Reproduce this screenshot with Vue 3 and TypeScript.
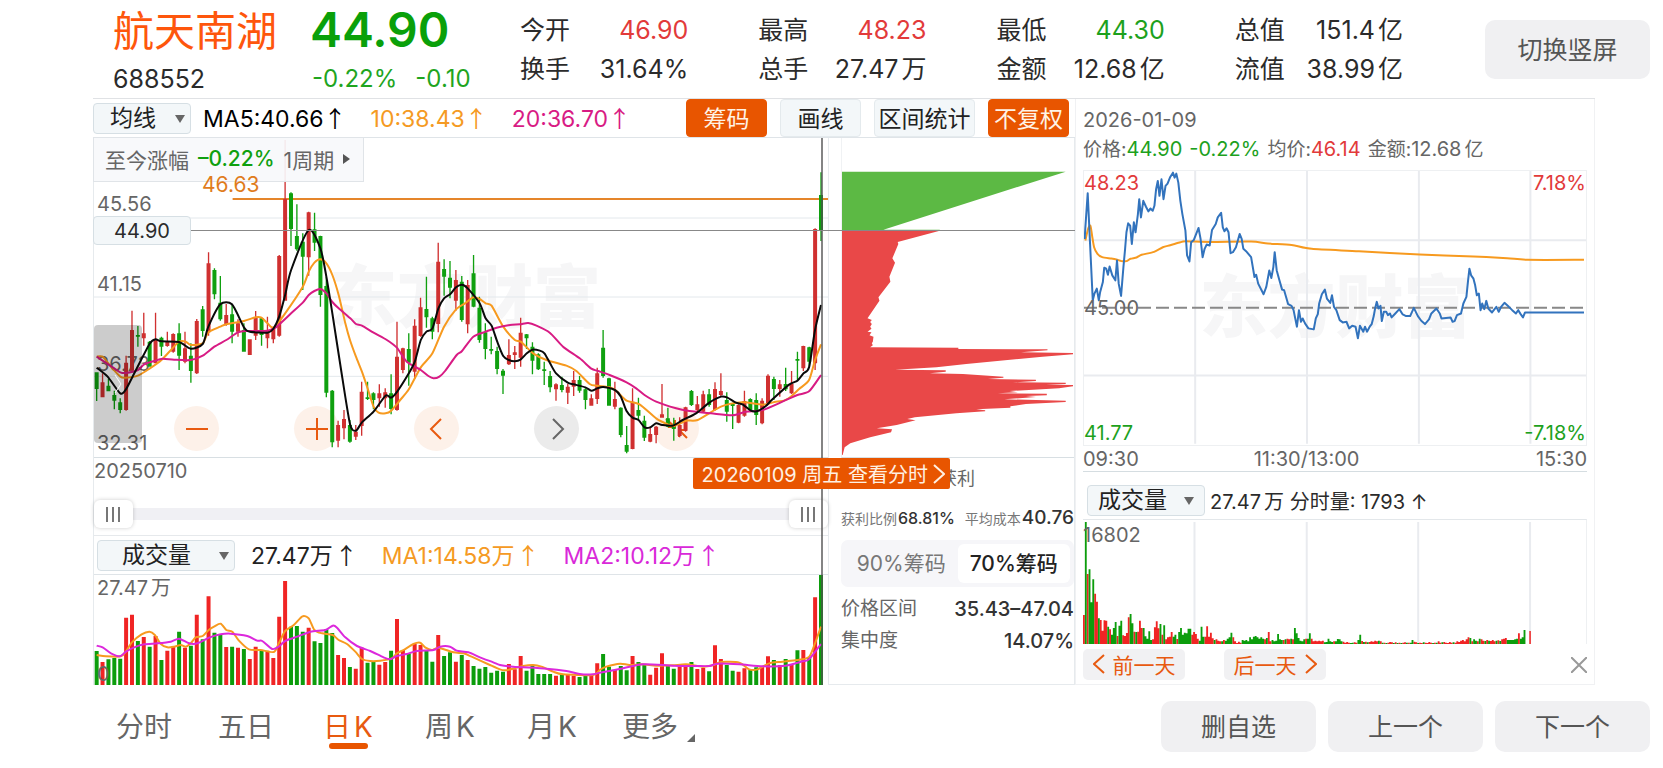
<script setup lang="ts">
import { ref } from 'vue'

interface Candle {
  up: boolean
  high: number
  top: number
  bottom: number
  low: number
  volume: number
}

interface Bar {
  up: boolean
  size: number
}

const stats = [
  [
    { label: '今开', value: '46.90', unit: '', tone: 'rise' },
    { label: '换手', value: '31.64%', unit: '', tone: '' },
  ],
  [
    { label: '最高', value: '48.23', unit: '', tone: 'rise' },
    { label: '总手', value: '27.47', unit: '万', tone: '' },
  ],
  [
    { label: '最低', value: '44.30', unit: '', tone: 'fall' },
    { label: '金额', value: '12.68', unit: '亿', tone: '' },
  ],
  [
    { label: '总值', value: '151.4', unit: '亿', tone: '' },
    { label: '流值', value: '38.99', unit: '亿', tone: '' },
  ],
]

const tabs = [
  { zh: '分时', latin: '' },
  { zh: '五日', latin: '' },
  { zh: '日', latin: 'K' },
  { zh: '周', latin: 'K' },
  { zh: '月', latin: 'K' },
  { zh: '更多', latin: '' },
]
const activeTab = ref(2)
const chipRange = ref('70')
const rangeStart = ref(0)
const rangeEnd = ref(100)

// direction, high, body top, body bottom, low, volume top (chart units)
const rawCandles = `
G 577 577 627 663 603|R 580 607 652 652 636|G 597 617 634 634 628|G 632 645 662 688 624|G 655 667 690 700 626
R 527 548 690 692 503|R 392 450 572 577 494|G 438 465 469 500 573|R 398 460 475 497 561|G 483 485 560 560 590
R 398 480 550 550 558|G 470 473 500 528 630|R 455 483 498 500 602|R 460 462 515 518 590|G 430 460 527 570 545
R 455 505 545 550 593|G 490 527 573 608 587|R 417 423 580 582 494|G 378 388 453 470 568|R 217 250 457 467 439
G 265 270 343 358 548|G 288 368 418 422 553|R 372 405 432 437 591|G 372 403 455 490 590|R 418 430 455 470 593
G 430 450 515 515 597|R 478 478 525 525 627|R 393 412 467 480 590|G 413 415 465 497 600|R 410 452 475 505 602
R 440 445 478 490 624|R 225 228 467 470 500|R -120 57 362 362 393|G 37 40 147 198 530|G 73 168 208 212 528
G 160 185 230 330 545|R 95 97 232 287 533|G 98 148 188 213 574|G 167 168 345 380 579|G 290 318 638 652 538
G 630 632 787 802 549|R 722 735 782 802 615|R 690 717 745 778 624|G 720 735 785 788 651|R 735 755 770 780 656
R 605 635 738 767 593|G 605 652 657 660 638|G 637 640 660 688 635|R 613 640 655 680 644|R 625 637 655 683 636
G 583 640 687 703 602|R 425 530 690 692 507|R 503 505 570 580 600|G 460 507 548 617 610|R 418 437 575 597 581
R 353 382 468 470 585|G 290 387 412 443 600|G 410 415 455 478 635|R 188 245 432 457 555|G 238 267 290 347 618
G 243 293 323 355 607|R 270 300 362 392 635|G 288 305 420 425 615|R 300 315 433 460 630|G 225 280 380 382 648
G 350 383 480 488 656|G 430 457 507 538 651|G 470 507 512 523 668|G 500 513 567 583 662|G 567 572 587 642 665
R 478 525 553 555 642|R 498 517 525 567 658|R 413 458 533 560 618|G 462 463 475 507 662|G 487 500 542 583 648
G 520 523 568 570 672|G 545 568 573 615 672|G 573 588 622 637 672|R 610 613 628 662 677|G 590 615 630 637 673
R 612 620 638 672 673|R 573 600 620 648 677|G 588 600 632 638 681|G 625 628 660 688 676|R 643 655 677 677 676
R 563 580 657 672 640|G 450 503 588 593 612|G 593 595 677 677 650|R 605 657 680 688 660|G 682 683 765 772 648
G 738 795 815 820 661|R 625 665 807 808 618|G 653 690 707 720 636|G 707 722 773 783 642|R 740 762 785 787 674
R 738 740 765 790 653|R 612 703 713 713 610|G 683 715 740 742 645|G 713 735 747 782 656|R 712 735 768 772 650
R 680 682 752 755 645|G 630 633 675 678 636|R 648 673 690 697 657|R 632 643 695 697 653|G 627 643 675 680 664
R 607 627 690 692 586|R 580 633 645 650 627|G 637 660 695 725 645|G 668 672 678 747 662|R 673 675 728 730 665
R 632 663 707 710 655|G 655 657 690 693 659|G 640 660 705 735 652|R 655 662 730 733 650|R 583 587 670 673 619
G 590 597 627 660 630|R 600 613 627 650 645|G 563 612 628 633 627|R 573 612 640 642 643|G 515 537 542 603 601
R 497 498 565 573 600|G 500 502 545 560 622|R 145 147 550 570 442|G -23 45 152 183 375`

const candles: Candle[] = rawCandles
  .trim()
  .split(/[|\n]/)
  .map((row) => {
    const [side, ...rest] = row.trim().split(' ')
    const [high, top, bottom, low, volume] = rest.map(Number)
    return { up: side === 'R', high, top, bottom, low, volume }
  })

const PITCH = 17.715
const candleX = (i: number) => 17 + PITCH * i

const candlePath = (up: boolean) =>
  candles
    .map((c, i) => {
      if (c.up !== up) return ''
      const x = candleX(i)
      return (
        `M${x - 6} ${c.top}h12V${Math.max(c.bottom, c.top + 5)}h-12z` +
        `M${x - 2} ${c.high}h4V${c.low}h-4z`
      )
    })
    .join('')

const volumePath = (up: boolean) =>
  candles
    .map((c, i) => (c.up === up ? `M${candleX(i) - 6} ${c.volume}h12V705h-12z` : ''))
    .join('')

// Catmull-Rom smoothing for the moving averages
const smooth = (source: string) => {
  const p = source
    .trim()
    .split(/\s+/)
    .map((s) => s.split(',').map(Number))
  let d = `M${p[0][0]} ${p[0][1]}`
  for (let i = 0; i < p.length - 1; i++) {
    const a = p[Math.max(i - 1, 0)]
    const b = p[i]
    const c = p[i + 1]
    const e = p[Math.min(i + 2, p.length - 1)]
    d += `C${b[0] + (c[0] - a[0]) / 8} ${b[1] + (c[1] - a[1]) / 8} ${c[0] - (e[0] - b[0]) / 8} ${c[1] - (e[1] - b[1]) / 8} ${c[0]} ${c[1]}`
  }
  return d
}

const ma5 = smooth(`17,563 50,590 88,640 105,628 125,590 176,492 194,478 212,484 265,486 300,506 336,492 353,440 389,373
424,373 460,442 478,455 531,458 548,447 566,410 584,345 602,270 655,150 690,205 708,290 726,400 750,555 779,732 797,752
815,727 850,695 886,647 903,653 921,635 956,580 974,545 992,480 1009,455 1027,445 1045,385 1062,355 1080,343 1098,322
1116,314 1133,325 1169,370 1187,415 1205,437 1222,485 1240,528 1257,540 1275,544 1293,538 1311,520 1328,509 1350,512
1364,520 1381,550 1399,580 1434,608 1452,613 1487,622 1505,632 1523,625 1541,621 1576,630 1594,650 1611,693 1629,713
1647,720 1665,742 1682,742 1700,730 1718,735 1750,737 1780,720 1820,700 1860,668 1895,650 1913,652 1940,668 1960,673
1985,692 2005,693 2030,678 2050,658 2100,614 2125,602 2143,580 2160,562 2178,450 2196,375`)

const ma10 = smooth(`17,530 35,530 60,560 88,590 105,593 141,587 176,566 212,540 247,503 265,485 285,485 300,495 336,490
353,457 389,440 407,433 460,423 495,412 513,413 531,430 550,443 584,400 637,320 655,275 672,248 690,238 708,250 726,285
745,345 765,430 779,480 797,530 815,575 832,625 850,680 865,698 886,700 903,692 930,660 956,628 992,562 1027,520
1062,440 1098,388 1125,370 1150,352 1169,357 1187,370 1205,377 1240,440 1275,480 1293,485 1330,520 1370,540 1430,557
1460,573 1500,612 1523,617 1560,622 1580,632 1611,662 1650,673 1700,715 1735,733 1755,738 1790,722 1825,720 1895,680
1960,667 2020,674 2060,665 2085,662 2105,650 2130,627 2160,600 2178,540 2196,493`)

const ma20 = smooth(`17,530 70,565 88,577 105,579 141,570 160,553 190,543 215,536 250,539 300,540 336,527 371,500 407,480
442,457 470,453 531,452 555,443 602,400 637,368 655,345 672,333 690,327 708,340 726,366 745,385 780,415 797,432 815,437
850,458 890,480 920,503 950,545 992,570 1015,588 1030,595 1048,590 1065,573 1100,525 1116,513 1150,470 1187,455 1220,443
1260,435 1290,433 1315,429 1340,437 1380,458 1420,500 1470,535 1505,566 1525,573 1560,585 1611,607 1640,625 1665,645
1700,665 1760,685 1800,693 1865,700 1930,706 1970,695 2020,690 2080,665 2125,645 2160,634 2196,585`)

const volumeMa1 = smooth(`17,615 45,619 90,619 105,605 123,577 152,553 176,545 192,555 210,582 230,592 250,590 270,585
285,590 300,580 315,562 336,558 354,540 370,530 390,521 407,540 425,545 445,572 475,598 510,600 550,606 565,580 584,543
610,525 636,499 655,505 672,540 695,550 727,555 745,570 770,582 795,605 815,627 840,633 870,632 905,625 920,610 940,600
970,582 990,578 1005,592 1025,600 1045,593 1090,607 1120,610 1145,620 1200,645 1230,658 1245,661 1270,656 1300,648
1330,645 1355,650 1390,665 1420,673 1510,675 1530,660 1550,650 1592,641 1620,645 1660,643 1700,647 1750,646 1790,643
1840,650 1870,646 1895,636 1950,638 1980,658 2005,658 2040,640 2080,635 2140,628 2162,618 2178,580 2196,530`)

const volumeMa2 = smooth(`17,587 35,592 60,610 87,619 105,605 130,592 160,583 200,580 240,575 265,566 295,580 320,580
355,563 390,553 420,551 470,558 500,572 515,573 545,597 565,590 584,573 620,560 660,545 705,540 727,527 740,533 765,562
800,588 840,603 880,622 900,628 920,618 950,612 980,603 1030,600 1050,590 1080,590 1100,602 1135,607 1170,622 1210,637
1230,645 1270,650 1370,656 1430,663 1470,672 1510,673 1530,668 1590,657 1660,643 1750,647 1820,648 1860,648 1885,641
1950,643 2020,649 2090,647 2140,634 2160,628 2196,582`)

const chipProfile = `35,212 330,212 203,246 205,252 187,295 195,308 178,350 181,365 145,412 148,422 112,475 125,480 120,486
125,492 120,500 124,506 112,515 124,517 118,526 130,530 128,545 125,550 128,556 120,562 386,563 386,567 655,568 655,571
575,577 732,579 732,583 640,590 410,612 320,622 195,629 348,631 348,635 300,640 400,642 522,650 522,653 475,657 620,659
620,663 550,667 710,668 710,672 650,674 732,675 732,679 690,685 540,693 565,697 505,700 653,701 653,706 590,708 620,711
525,718 710,722 710,726 590,732 543,739 543,743 440,748 467,751 467,754 380,760 255,772 232,777 257,781 200,795 140,805
186,808 183,817 120,832 60,850 43,862 37,885 35,885`

const minutePrice = `26,235 28,200 35,97 42,250 50,420 55,400 62,385 68,420 72,395 80,365 84,322 90,325 95,343 100,318
108,345 117,360 122,300 127,370 134,407 141,320 146,265 150,215 155,188 161,195 166,250 172,185 177,215 184,160 188,115
193,170 200,120 208,138 215,152 221,143 228,150 233,135 238,85 243,60 248,105 254,55 260,115 266,75 272,68 280,48 288,35
293,50 298,38 304,65 310,120 316,160 325,210 330,285 337,303 342,245 350,238 364,202 370,235 376,290 382,265 388,252
397,255 404,208 415,190 421,170 431,156 436,200 441,212 447,203 453,215 459,278 466,275 475,260 486,220 492,235 497,265
505,272 520,290 530,350 535,343 541,370 557,402 565,380 574,330 580,353 586,320 590,275 596,330 604,360 612,388 618,390
630,432 640,437 646,450 656,500 662,450 668,485 673,475 680,490 690,505 706,508 712,475 718,462 722,430 730,402 739,388
745,415 755,428 760,405 766,440 773,450 783,480 792,487 803,485 811,505 820,497 830,500 837,535 843,497 853,515 858,500
864,515 872,500 878,492 884,468 888,445 893,425 898,445 904,437 908,483 914,455 921,455 926,465 932,460 937,472 948,460
960,447 970,463 980,468 992,468 1003,443 1015,468 1025,482 1036,492 1048,478 1055,460 1070,445 1080,460 1085,475
1112,472 1118,485 1124,483 1131,465 1143,460 1150,430 1159,410 1164,360 1168,325 1173,345 1180,355 1185,375 1190,405
1196,400 1201,450 1206,430 1212,447 1218,422 1224,445 1235,457 1248,440 1255,455 1262,440 1272,428 1285,440 1295,450
1306,460 1313,450 1320,462 1327,472 1333,457 1508,457`

const minuteAverage = smooth(`28,240 36,205 43,195 48,225 54,260 64,280 78,290 105,294 120,297 135,302 150,302 162,295
180,291 195,283 232,274 258,260 280,254 310,245 325,242 400,244 520,243 570,249 640,253 700,265 840,272 1020,282
1180,288 1280,293 1340,298 1508,298`)

const minuteVolumes: Bar[] = `R87 G366 R210 G224 G125 G194 R151 R127 G77 R72 R40 R71 R70 G52 R44 G28 G48 G66 R24 G55 G70
R26 R24 R33 R80 G90 G62 R37 G36 R37 R70 R48 G48 G23 G16 G38 G12 R14 R50 R68 R47 G60 R28 G56 R14 R20 R22 R36 G22 G28 R15
G36 G48 G28 G34 G32 G46 G46 R28 R36 R30 R16 G10 G52 G22 R22 R53 R22 R34 R17 G12 R14 R10 R8 G8 R12 G10 G16 G20 G34 R20
R8 R3 R7 R4 G12 G10 G12 G8 G20 G14 G22 G24 G20 G16 G20 G16 R14 G18 R36 R8 G12 G8 G10 G30 G14 G12 R12 G14 R16 R14 G16
R14 G48 G32 G18 G10 G8 G14 R16 G16 G32 R16 R8 R10 R8 R10 R8 R10 G5 G6 G16 G8 G6 R8 G8 G15 G14 G8 R7 R4 R6 R4 G3 G4 R5
R4 G12 G28 R9 G6 R7 G5 R6 R8 R7 R10 R8 G10 R8 G4 R4 G3 R4 R6 R5 G3 R5 G3 R4 G3 R4 R5 G4 R4 G4 G12 R7 R5 G3 R4 R3 G5 R4
R3 R6 R4 G3 R4 G4 R8 R4 G5 R6 R4 R3 R6 R4 G5 R4 R8 R6 R10 R12 R8 R14 R20 G18 R8 G14 G10 R8 G16 R14 R10 G9 R12 G10 R9
R12 R8 G10 R11 G9 R14 R16 R18 G12 G12 G12 G12 G14 G16 R32 G16 G20 G42`
  .trim()
  .split(/\s+/)
  .map((s) => ({ up: s[0] === 'R', size: Number(s.slice(1)) }))

const minutePath = (up: boolean) =>
  minuteVolumes
    .map((b, i) => (b.up === up ? `M${35 + i * 4.94} 579v${-b.size}h4.9v${b.size}z` : ''))
    .join('')
</script>

<template>
  <div class="page">
    <header class="quote">
      <div class="quote-name">
        <h1>航天南湖</h1>
        <span class="code">688552</span>
      </div>
      <div class="quote-price">
        <strong>44.90</strong>
        <div class="change"><span>-0.22%</span><span>-0.10</span></div>
      </div>
      <div class="stats">
        <dl v-for="(group, g) in stats" :key="g">
          <div v-for="s in group" :key="s.label">
            <dt>{{ s.label }}</dt>
            <dd :class="s.tone">{{ s.value }}<span v-if="s.unit" class="unit">{{ s.unit }}</span></dd>
          </div>
        </dl>
      </div>
      <button type="button" class="soft-button rotate">切换竖屏</button>
    </header>

    <main class="board">
      <section class="daily">
        <div class="toolbar">
          <label class="picker picker-ma">
            <select aria-label="主图指标"><option>均线</option></select>
            <svg viewBox="0 0 10 8"><path d="M0 0h10L5 8z" /></svg>
          </label>
          <div class="ma-values">
            <span class="black">MA5:40.66<i>↑</i></span>
            <span class="amber">10:38.43<i>↑</i></span>
            <span class="pink">20:36.70<i>↑</i></span>
          </div>
          <div class="tools">
            <button type="button" class="on">筹码</button>
            <button type="button">画线</button>
            <button type="button" class="wide">区间统计</button>
            <button type="button" class="on">不复权</button>
          </div>
        </div>

        <div class="split">
          <div class="kline-column">
            <div class="kline">
              <span class="watermark">东方财富</span>
              <svg class="plot" viewBox="9 -126 2208 957" preserveAspectRatio="none">
                <g class="grid">
                  <path d="M9 114H2217M9 351H2217M9 589H2217" />
                </g>
                <path class="orange-line" d="M426 57H2217" />
              </svg>
              <span class="axis y1">45.56</span>
              <span class="axis y2">41.15</span>
              <span class="axis y3">36.73</span>
              <span class="axis y4">32.31</span>
              <div class="zoomers">
                <button type="button" aria-label="缩小"><svg viewBox="0 0 24 24"><path d="M1 12h22" /></svg></button>
                <button type="button" aria-label="放大"><svg viewBox="0 0 24 24"><path d="M1 12h22M12 1v22" /></svg></button>
                <button type="button" aria-label="左移"><svg viewBox="0 0 24 24"><path d="M16 2L6 12l10 10" /></svg></button>
                <button type="button" aria-label="右移" class="gray"><svg viewBox="0 0 24 24"><path d="M8 2l10 10L8 22" /></svg></button>
                <button type="button" aria-label="收起"><svg viewBox="0 0 24 24"><path d="M1 2l9 8M3 10h7V3M22 21l-8-8M14 20v-7h8" /></svg></button>
              </div>
              <svg class="plot" viewBox="9 -126 2208 957" preserveAspectRatio="none">
                <path class="candle-up" :d="candlePath(true)" />
                <path class="candle-down" :d="candlePath(false)" />
                <path class="line amber-line" :d="ma10" />
                <path class="line pink-line" :d="ma20" />
                <path class="line black-line" :d="ma5" />
              </svg>
              <button type="button" class="drawer" aria-label="展开">
                <svg viewBox="0 0 8 20"><path d="M1 1l6 9-6 9" /></svg>
              </button>
              <button type="button" class="period">
                <span>至今涨幅</span><b>–0.22%</b><span>1周期</span>
                <svg viewBox="0 0 7 10"><path d="M0 0l7 5-7 5z" /></svg>
              </button>
              <span class="peak">46.63</span>
            </div>

            <div class="range">
              <span class="start-date">20250710</span>
              <div class="slider">
                <input v-model="rangeStart" type="range" min="0" max="100" aria-label="起始日期" />
                <input v-model="rangeEnd" type="range" min="0" max="100" aria-label="结束日期" />
              </div>
            </div>

            <div class="volume-bar">
              <label class="picker picker-volume">
                <select aria-label="副图指标"><option>成交量</option></select>
                <svg viewBox="0 0 10 8"><path d="M0 0h10L5 8z" /></svg>
              </label>
              <span class="dark">27.47万<i>↑</i></span>
              <span class="amber">MA1:14.58万<i>↑</i></span>
              <span class="violet">MA2:10.12万<i>↑</i></span>
            </div>

            <div class="volume">
              <svg class="plot" viewBox="9 375 2208 330" preserveAspectRatio="none">
                <path class="bar-up" :d="volumePath(true)" />
                <path class="bar-down" :d="volumePath(false)" />
                <path class="line amber-line" :d="volumeMa1" />
                <path class="line violet-line" :d="volumeMa2" />
              </svg>
              <span class="axis vol-top">27.47<span class="unit">万</span></span>
              <span class="axis vol-zero">0</span>
            </div>
            <div class="cross-v"></div>
          </div>

          <aside class="chips">
            <div class="chips-plot">
              <svg class="plot" viewBox="35 -66 700 957" preserveAspectRatio="none">
                <path class="chip-green" d="M35 35H710L160 209H330V212H35z" />
                <polygon class="chip-red" :points="chipProfile" />
              </svg>
            </div>
            <div class="chips-body">
              <p class="profit">获利</p>
              <p class="summary">
                <span>获利比例<b class="small">68.81%</b></span>
                <span>平均成本<b>40.76</b></span>
              </p>
              <div class="segments">
                <button type="button" :class="{ active: chipRange === '90' }" @click="chipRange = '90'">90%筹码</button>
                <button type="button" :class="{ active: chipRange === '70' }" @click="chipRange = '70'">70%筹码</button>
              </div>
              <dl class="chip-facts">
                <div><dt>价格区间</dt><dd>35.43–47.04</dd></div>
                <div><dt>集中度</dt><dd>14.07%</dd></div>
              </dl>
            </div>
          </aside>

          <div class="cross-h"></div>
          <span class="cross-price">44.90</span>
          <button type="button" class="date-tag">
            20260109 周五 查看分时
            <svg viewBox="0 0 12 20"><path d="M1 1l10 9-10 9" /></svg>
          </button>
        </div>
      </section>

      <section class="minute">
        <p class="minute-date">2026-01-09</p>
        <p class="minute-info">
          <span>价格:<em class="fall">44.90</em></span>
          <em class="fall">-0.22%</em>
          <span>均价:<em class="rise">46.14</em></span>
          <span>金额:<em>12.68</em><span class="unit">亿</span></span>
        </p>
        <div class="minute-price">
          <span class="watermark">东方财富</span>
          <svg class="plot" viewBox="24 30 1490 827" preserveAspectRatio="none">
            <path class="grid-strong" d="M354 30V853M686 30V853M1018 30V853M1349 30V853M24 239H1514M24 647H1514" />
            <path class="base-line" d="M24 443H1514" />
            <path class="line amber-line" :d="minuteAverage" />
            <polyline class="line blue-line" :points="minutePrice" />
          </svg>
          <span class="corner tl rise">48.23</span>
          <span class="corner tr rise">7.18%</span>
          <span class="corner ml">45.00</span>
          <span class="corner bl fall">41.77</span>
          <span class="corner br fall">-7.18%</span>
        </div>
        <div class="times"><span>09:30</span><span>11:30/13:00</span><span>15:30</span></div>
        <div class="minute-bar">
          <label class="picker picker-minute">
            <select aria-label="分时指标"><option>成交量</option></select>
            <svg viewBox="0 0 10 8"><path d="M0 0h10L5 8z" /></svg>
          </label>
          <span>27.47<span class="unit">万</span> 分时量: 1793 ↑</span>
        </div>
        <div class="minute-volume">
          <svg class="plot" viewBox="35 207 1331 372" preserveAspectRatio="none">
            <path class="grid-strong" d="M330 213V579M627 213V579M922 213V579M1218 213V579" />
            <path class="bar-up" :d="minutePath(true)" />
            <path class="bar-down" :d="minutePath(false)" />
            <path class="bar-up" d="M1216 540h4V579h-4z" />
          </svg>
          <span class="corner vol">16802</span>
        </div>
        <div class="minute-actions">
          <button type="button" class="day">
            <svg viewBox="0 0 12 20"><path d="M11 1L1 10l10 9" /></svg>前一天
          </button>
          <button type="button" class="day">
            后一天<svg viewBox="0 0 12 20"><path d="M1 1l10 9-10 9" /></svg>
          </button>
          <button type="button" class="close" aria-label="关闭">
            <svg viewBox="0 0 16 16"><path d="M0 0l16 16M16 0L0 16" /></svg>
          </button>
        </div>
      </section>
    </main>

    <footer class="bottom">
      <nav class="tabs">
        <button
          v-for="(t, i) in tabs"
          :key="i"
          type="button"
          :class="{ active: i === activeTab }"
          @click="activeTab = i"
        >
          {{ t.zh }}<span v-if="t.latin" class="unit">{{ t.latin }}</span>
          <svg v-if="i === 5" viewBox="0 0 8 8"><path d="M8 0v8H0z" /></svg>
        </button>
      </nav>
      <div class="actions">
        <button type="button" class="soft-button">删自选</button>
        <button type="button" class="soft-button">上一个</button>
        <button type="button" class="soft-button">下一个</button>
      </div>
    </footer>
  </div>
</template>

<style>
body {
  margin: 0;
  background: #fff;
}
</style>

<style scoped>
.page {
  font-family: Inter, "Noto Sans CJK SC", sans-serif;
  color: #2b2b2b;
  background: #fff;
  min-height: 100vh;
  box-sizing: border-box;
  padding-left: 93px;
  overflow: hidden;
}
.page * {
  box-sizing: border-box;
}
button,
select {
  font-family: inherit;
  margin: 0;
  border: 0;
  padding: 0;
  background: none;
  color: inherit;
  white-space: nowrap;
}
h1, p, dl, dd {
  margin: 0;
}
em, i {
  font-style: normal;
}
svg {
  display: block;
  fill: none;
}
.unit {
  margin-left: 3px;
}
.rise { color: #e23a3a; }
.fall { color: #1da11d; }
.black { color: #000; }
.dark { color: #222; }
.amber { color: #f59a23; }
.pink { color: #d81b84; }
.violet { color: #d929d9; }

/* header */
.quote {
  display: flex;
  height: 98px;
  padding: 0 13px 0 20px;
}
.quote-name {
  width: 197px;
  padding-top: 6px;
}
.quote-name h1 {
  font-size: 41px;
  line-height: 50px;
  font-weight: 400;
  color: #fe560c;
  white-space: nowrap;
}
.code {
  display: block;
  margin-top: 8px;
  font-size: 25px;
  line-height: 30px;
}
.quote-price {
  width: 210px;
  padding-top: 5px;
}
.quote-price strong {
  display: block;
  font-size: 48px;
  line-height: 50px;
  font-weight: 600;
  color: #0aa00a;
}
.change {
  display: flex;
  gap: 18px;
  margin-top: 9px;
  padding-left: 2px;
  font-size: 24px;
  line-height: 30px;
  color: #1fa51f;
}
.stats {
  flex: 1;
  display: grid;
  grid-template-columns: repeat(4, 1fr);
  gap: 70px;
  margin-right: 82px;
  padding-top: 11px;
}
.stats dl > div {
  display: flex;
  justify-content: space-between;
  font-size: 25px;
  line-height: 39px;
  white-space: nowrap;
}
.soft-button {
  padding-bottom: 3px;
  font-size: 25px;
  color: #555;
  background: #f0f0f2;
  border-radius: 10px;
  text-align: center;
}
.rotate {
  width: 165px;
  height: 59px;
  margin-top: 20px;
}

/* board */
.board {
  display: grid;
  grid-template-columns: 982fr 520fr;
  margin-right: 68px;
  border-top: 1px solid #e0e2e5;
}
.daily {
  min-width: 0;
}
.toolbar {
  display: flex;
  align-items: center;
  height: 39px;
  border-bottom: 1px solid #dfe4e8;
}
.picker {
  position: relative;
  display: block;
}
.picker select {
  display: block;
  appearance: none;
  width: 100%;
  height: 31px;
  border: 1px solid #d6dfe4;
  border-radius: 4px;
  background: #f3f7f9;
  font-size: 23px;
  line-height: 29px;
  color: #222;
}
.picker svg {
  position: absolute;
  right: 6px;
  top: 12px;
  width: 10px;
  height: 8px;
  fill: #666;
  pointer-events: none;
}
.picker-ma {
  width: 98px;
}
.picker-ma select {
  padding-left: 16px;
}
.ma-values {
  flex: 1;
  display: flex;
  margin-left: 12px;
  gap: 24px;
  font-size: 23px;
  line-height: 30px;
  white-space: nowrap;
}
.ma-values i,
.volume-bar i {
  font-family: "Noto Sans CJK SC", sans-serif;
}
.tools {
  display: flex;
  gap: 13px;
  margin-right: 6px;
}
.tools button {
  width: 81px;
  height: 38px;
  padding-bottom: 2px;
  font-size: 23px;
  color: #222;
  background: #f3f7f9;
  border: 1px solid #e4eaed;
  border-radius: 4px;
}
.tools .wide {
  width: 101px;
}
.tools .on {
  color: #fff3e6;
  background: #e85500;
  border-color: #e85500;
}

.split {
  position: relative;
  display: grid;
  grid-template-columns: 736fr 246fr;
}
.kline-column {
  position: relative;
  border-left: 1px solid #e6eaed;
  border-right: 1px solid #e6eaed;
}
.plot {
  position: absolute;
  left: 0;
  top: 0;
  width: 100%;
  height: 100%;
}
.plot path,
.plot polyline {
  vector-effect: non-scaling-stroke;
}
.grid {
  stroke: #e3e8ec;
  stroke-width: 1;
}
.grid-strong {
  stroke: #e9ebef;
  stroke-width: 2;
}
.orange-line {
  stroke: #e5852a;
  stroke-width: 2;
}
.candle-up { fill: #d03030; }
.candle-down { fill: #0fa00f; }
.bar-up { fill: #f02424; }
.bar-down { fill: #0c9d0c; }
.line {
  fill: none;
  stroke-width: 2;
  stroke-linejoin: round;
}
.amber-line { stroke: #f79a1f; }
.pink-line { stroke: #d81b84; }
.black-line { stroke: #0a0a0a; }
.violet-line { stroke: #dc28dc; }
.blue-line { stroke: #3273bd; }
.base-line {
  stroke: #888;
  stroke-width: 2;
  stroke-dasharray: 13 5;
}
.chip-green { fill: #5cb944; }
.chip-red { fill: #e94848; }

.kline {
  position: relative;
  height: 320px;
  border-bottom: 1px solid #d8dfe3;
}
.watermark {
  position: absolute;
  left: 32%;
  top: 119px;
  font-size: 68px;
  line-height: 80px;
  font-weight: 900;
  color: #f6f6f7;
  white-space: nowrap;
}
.axis {
  position: absolute;
  left: 3px;
  font-size: 20px;
  line-height: 24px;
  color: #666;
}
.y1 { top: 54px; }
.y2 { top: 134px; }
.y3 { top: 214px; }
.y4 { top: 293px; }
.peak {
  position: absolute;
  left: 108px;
  top: 35px;
  font-size: 21px;
  line-height: 24px;
  color: #e07c1c;
}
.zoomers {
  position: absolute;
  left: 80px;
  bottom: 6px;
  display: flex;
  gap: 75px;
}
.zoomers button {
  width: 45px;
  height: 45px;
  border-radius: 50%;
  background: #fdf1e9;
}
.zoomers svg {
  width: 24px;
  height: 24px;
  margin: auto;
  stroke: #e85a10;
  stroke-width: 2;
}
.zoomers .gray {
  background: #ebebeb;
}
.zoomers .gray svg {
  stroke: #666;
}
.drawer {
  position: absolute;
  left: 0;
  top: 187px;
  width: 48px;
  height: 118px;
  border-radius: 4px;
  background: rgba(0, 0, 0, 0.2);
}
.drawer svg {
  width: 8px;
  height: 20px;
  margin: auto;
  stroke: #fff;
}
.period {
  position: absolute;
  left: -1px;
  top: -1px;
  display: flex;
  align-items: center;
  gap: 9px;
  height: 45px;
  padding: 0 13px 2px 11px;
  font-size: 21px;
  color: #666;
  background: rgba(247, 248, 251, 0.92);
  border: 1px solid #e0e4e8;
}
.period b {
  font-weight: 500;
  color: #0fa00f;
}
.period svg {
  width: 7px;
  height: 10px;
  fill: #555;
}

.range {
  height: 78px;
  padding-top: 1px;
  border-bottom: 1px solid #e6e9ec;
}
.start-date {
  display: block;
  font-size: 20px;
  line-height: 24px;
  color: #666;
}
.slider {
  position: relative;
  height: 28px;
  margin-top: 17px;
  background: linear-gradient(#f0f0f4, #f0f0f4) center / 100% 12px no-repeat;
}
.slider input {
  position: absolute;
  left: 0;
  top: 0;
  width: 100%;
  height: 28px;
  margin: 0;
  appearance: none;
  background: none;
  pointer-events: none;
}
.slider input::-webkit-slider-thumb {
  appearance: none;
  width: 39px;
  height: 28px;
  border-radius: 6px;
  pointer-events: auto;
  background:
    linear-gradient(#777, #777) 12px 7px / 2px 15px no-repeat,
    linear-gradient(#777, #777) 18px 7px / 2px 15px no-repeat,
    linear-gradient(#777, #777) 24px 7px / 2px 15px no-repeat,
    #fff;
  box-shadow: 0 0 4px rgba(0, 0, 0, 0.2);
}

.volume-bar {
  display: flex;
  align-items: center;
  height: 39px;
  padding-left: 3px;
  font-size: 23px;
  line-height: 30px;
  white-space: nowrap;
  border-bottom: 1px solid #dfe4e8;
}
.volume-bar > span {
  margin-right: 24px;
}
.volume-bar i {
  margin-left: 2px;
}
.picker-volume {
  width: 138px;
  margin-right: 16px;
}
.picker-volume select {
  padding-left: 24px;
}
.volume {
  position: relative;
  height: 110px;
}
.vol-top { top: 1px; }
.vol-zero { top: 87px; }
.cross-v {
  position: absolute;
  top: 0;
  bottom: 0;
  right: 5px;
  width: 2px;
  background: rgba(80, 80, 80, 0.7);
}
.cross-h {
  position: absolute;
  left: 97px;
  right: 0;
  top: 92px;
  height: 1px;
  background: #888;
}
.cross-price {
  position: absolute;
  left: 0;
  top: 78px;
  width: 98px;
  height: 29px;
  font-size: 20px;
  line-height: 28px;
  text-align: center;
  background: #f3f7f9;
  border: 1px solid #d6dfe4;
  border-radius: 4px;
}
.date-tag {
  position: absolute;
  right: 125px;
  top: 320px;
  display: flex;
  align-items: center;
  gap: 5px;
  height: 31px;
  padding: 0 5px 0 9px;
  font-size: 20px;
  color: #fff0e2;
  background: #e85500;
  border-radius: 2px;
}
.date-tag svg {
  width: 12px;
  height: 20px;
  stroke: #fff0e2;
  stroke-width: 2;
}

/* chips */
.chips {
  border-right: 1px solid #e6eaed;
  border-bottom: 1px solid #e6eaed;
}
.chips-plot {
  position: relative;
  height: 320px;
  margin-left: 12px;
  border-left: 1px solid #f0f2f4;
  border-bottom: 1px solid #d8dfe3;
}
.chips-body {
  padding-left: 12px;
}
.profit {
  padding: 9px 0 0 98px;
  font-size: 18px;
  line-height: 24px;
  color: #666;
}
.summary {
  display: flex;
  justify-content: space-between;
  margin-top: 13px;
  font-size: 14px;
  line-height: 28px;
  color: #777;
  white-space: nowrap;
}
.summary b {
  margin-left: 1px;
  font-size: 19px;
  font-weight: 500;
  color: #333;
}
.summary .small {
  font-size: 16px;
}
.segments {
  display: flex;
  height: 47px;
  margin-top: 7px;
  padding: 4px;
  background: #f6f6f9;
  border-radius: 7px;
}
.segments button {
  flex: 1;
  padding-bottom: 3px;
  font-size: 21px;
  color: #777;
  border-radius: 6px;
}
.segments .active {
  font-weight: 500;
  color: #222;
  background: #fff;
}
.chip-facts {
  margin-top: 6px;
}
.chip-facts div {
  display: flex;
  justify-content: space-between;
  font-size: 19px;
  line-height: 32px;
}
.chip-facts dt {
  color: #666;
}
.chip-facts dd {
  font-size: 20px;
  font-weight: 500;
  color: #333;
}

/* minute panel */
.minute {
  min-width: 0;
  padding: 9px 7px 0 7px;
  font-size: 20px;
  border-left: 1px solid #f0f1f3;
  border-right: 1px solid #f0f1f3;
  border-bottom: 1px solid #f0f1f3;
}
.minute-date {
  line-height: 24px;
  color: #666;
}
.minute-info {
  display: flex;
  gap: 7px;
  margin-top: 5px;
  font-size: 19px;
  line-height: 24px;
  color: #666;
  white-space: nowrap;
}
.minute-info em {
  font-size: 20px;
}
.minute-price {
  position: relative;
  height: 276px;
  margin-top: 8px;
  border: 1px solid #eef0f2;
}
.minute-price .watermark {
  left: 23%;
  top: 96px;
}
.corner {
  position: absolute;
  line-height: 24px;
}
.tl { left: 0; top: 0; }
.tr { right: 0; top: 0; }
.ml { left: 0; top: 125px; color: #666; }
.bl { left: 0; bottom: 0; }
.br { right: 0; bottom: 0; }
.vol { left: 0; top: 3px; color: #666; }
.times {
  display: grid;
  grid-template-columns: 3fr auto 4fr;
  padding-top: 1px;
  line-height: 24px;
  color: #666;
  border-bottom: 1px solid #d5dde1;
}
.times span:last-child {
  text-align: right;
}
.minute-bar {
  display: flex;
  align-items: center;
  gap: 5px;
  height: 47px;
  padding: 10px 0 0 4px;
  white-space: nowrap;
}
.picker-minute {
  width: 118px;
}
.picker-minute select {
  padding-left: 10px;
}
.picker-minute svg {
  right: 11px;
}
.minute-volume {
  position: relative;
  height: 125px;
  border-top: 1px solid #e3e7ea;
  border-right: 1px solid #eef0f2;
}
.minute-actions {
  display: flex;
  align-items: center;
  gap: 39px;
  padding-top: 5px;
}
.day {
  display: flex;
  align-items: center;
  justify-content: center;
  gap: 8px;
  width: 102px;
  height: 31px;
  padding-bottom: 2px;
  font-size: 21px;
  color: #e85a10;
  background: #f1f1f3;
  border-radius: 5px;
}
.day svg {
  width: 12px;
  height: 20px;
  stroke: #e85a10;
  stroke-width: 2;
}
.close {
  margin-left: auto;
}
.close svg {
  width: 16px;
  height: 16px;
  stroke: #999;
  stroke-width: 2;
}

/* footer */
.bottom {
  display: flex;
  justify-content: space-between;
  padding: 16px 13px 0 0;
}
.tabs {
  display: flex;
}
.tabs button {
  position: relative;
  width: 102px;
  height: 51px;
  padding-bottom: 3px;
  font-size: 28px;
  color: #666;
}
.tabs button:last-child {
  width: 94px;
}
.tabs .active {
  color: #e85a10;
}
.tabs .active::after {
  content: "";
  position: absolute;
  left: 32px;
  bottom: 3px;
  width: 39px;
  height: 6px;
  border-radius: 3px;
  background: #e85500;
}
.tabs svg {
  position: absolute;
  right: 2px;
  bottom: 10px;
  width: 8px;
  height: 8px;
  fill: #666;
}
.actions {
  display: flex;
  gap: 12px;
}
.actions button {
  width: 155px;
  height: 51px;
}
</style>
